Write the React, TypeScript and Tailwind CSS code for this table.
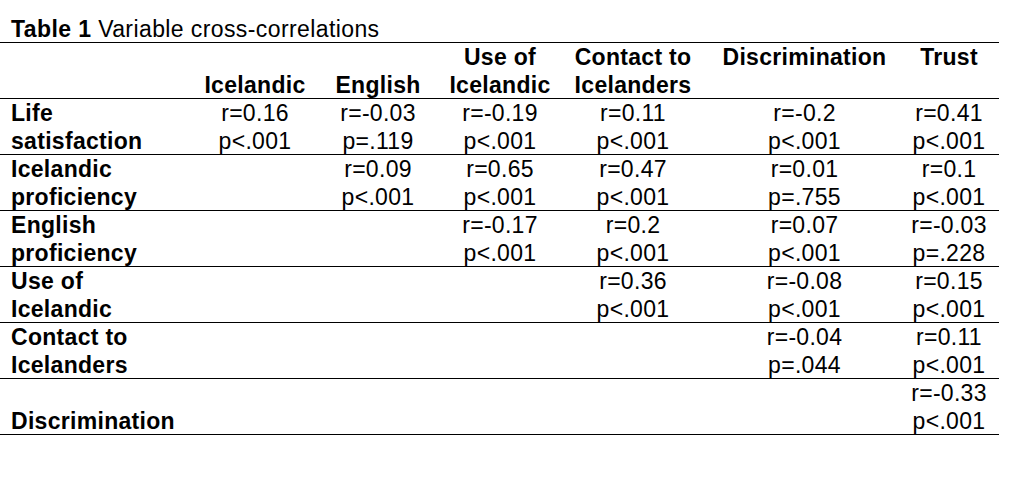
import React from "react";

type Cell = { r: string; p: string } | null;

const cols = "grid grid-cols-[198px_114px_132px_112px_154px_189px_100px]";

const rows: { label: [string, string]; cells: Cell[] }[] = [
  {
    label: ["Life", "satisfaction"],
    cells: [
      { r: "r=0.16", p: "p<.001" },
      { r: "r=-0.03", p: "p=.119" },
      { r: "r=-0.19", p: "p<.001" },
      { r: "r=0.11", p: "p<.001" },
      { r: "r=-0.2", p: "p<.001" },
      { r: "r=0.41", p: "p<.001" },
    ],
  },
  {
    label: ["Icelandic", "proficiency"],
    cells: [
      null,
      { r: "r=0.09", p: "p<.001" },
      { r: "r=0.65", p: "p<.001" },
      { r: "r=0.47", p: "p<.001" },
      { r: "r=0.01", p: "p=.755" },
      { r: "r=0.1", p: "p<.001" },
    ],
  },
  {
    label: ["English", "proficiency"],
    cells: [
      null,
      null,
      { r: "r=-0.17", p: "p<.001" },
      { r: "r=0.2", p: "p<.001" },
      { r: "r=0.07", p: "p<.001" },
      { r: "r=-0.03", p: "p=.228" },
    ],
  },
  {
    label: ["Use of", "Icelandic"],
    cells: [
      null,
      null,
      null,
      { r: "r=0.36", p: "p<.001" },
      { r: "r=-0.08", p: "p<.001" },
      { r: "r=0.15", p: "p<.001" },
    ],
  },
  {
    label: ["Contact to", "Icelanders"],
    cells: [
      null,
      null,
      null,
      null,
      { r: "r=-0.04", p: "p=.044" },
      { r: "r=0.11", p: "p<.001" },
    ],
  },
  {
    label: ["", "Discrimination"],
    cells: [null, null, null, null, null, { r: "r=-0.33", p: "p<.001" }],
  },
];

function Two({ a, b, bold, left }: { a: string; b: string; bold?: boolean; left?: boolean }) {
  return (
    <div
      className={`flex flex-col ${left ? "items-start pl-[11px]" : "items-center"} ${
        bold ? "font-bold" : "font-normal"
      }`}
    >
      <div className="h-[28px] whitespace-nowrap">{a}</div>
      <div className="h-[28px] whitespace-nowrap">{b}</div>
    </div>
  );
}

export default function App() {
  return (
    <div
      className="w-[1015px] h-[482px] bg-white text-black text-[23px] leading-[28px] tracking-[0.3px]"
      style={{ fontFamily: '"Liberation Sans", Arial, sans-serif' }}
    >
      <div className="w-[999px]">
        <div className="h-[43px] pt-[15px] pl-[11px] border-b border-black tracking-[0.4px] whitespace-nowrap">
          <span className="font-bold">Table 1</span> Variable cross-correlations
        </div>
        <div className={`${cols} h-[56px] border-b border-black`}>
          <div />
          <Two a="" b="Icelandic" bold />
          <Two a="" b="English" bold />
          <Two a="Use of" b="Icelandic" bold />
          <Two a="Contact to" b="Icelanders" bold />
          <Two a="Discrimination" b="" bold />
          <Two a="Trust" b="" bold />
        </div>
        {rows.map((row, i) => (
          <div key={i} className={`${cols} h-[56px] border-b border-black`}>
            <Two a={row.label[0]} b={row.label[1]} bold left />
            {row.cells.map((c, j) => (c ? <Two key={j} a={c.r} b={c.p} /> : <div key={j} />))}
          </div>
        ))}
      </div>
    </div>
  );
}
